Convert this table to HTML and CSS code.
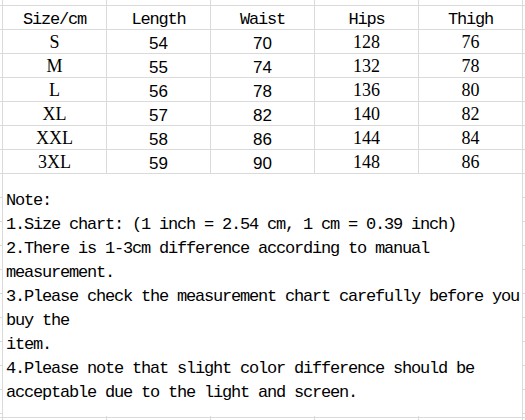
FILE: index.html
```html
<!DOCTYPE html>
<html lang="en">
<head>
<meta charset="utf-8">
<title>Size chart</title>
<link rel="stylesheet" href="styles.css">
</head>
<body>
<div class="sheet">
  <div class="grid">
    <div class="cell edge"></div><div class="cell"></div><div class="cell"></div><div class="cell"></div><div class="cell"></div><div class="cell"></div><div class="cell edge"></div>

    <div class="cell edge"></div>
    <div class="cell head">Size/cm</div>
    <div class="cell head">Length</div>
    <div class="cell head">Waist</div>
    <div class="cell head">Hips</div>
    <div class="cell head">Thigh</div>
    <div class="cell edge"></div>

    <div class="cell edge"></div><div class="cell serif">S</div><div class="cell sans">54</div><div class="cell sans">70</div><div class="cell serif">128</div><div class="cell serif">76</div><div class="cell edge"></div>
    <div class="cell edge"></div><div class="cell serif">M</div><div class="cell sans">55</div><div class="cell sans">74</div><div class="cell serif">132</div><div class="cell serif">78</div><div class="cell edge"></div>
    <div class="cell edge"></div><div class="cell serif">L</div><div class="cell sans">56</div><div class="cell sans">78</div><div class="cell serif">136</div><div class="cell serif">80</div><div class="cell edge"></div>
    <div class="cell edge"></div><div class="cell serif">XL</div><div class="cell sans">57</div><div class="cell sans">82</div><div class="cell serif">140</div><div class="cell serif">82</div><div class="cell edge"></div>
    <div class="cell edge"></div><div class="cell serif">XXL</div><div class="cell sans">58</div><div class="cell sans">86</div><div class="cell serif">144</div><div class="cell serif">84</div><div class="cell edge"></div>
    <div class="cell edge"></div><div class="cell serif">3XL</div><div class="cell sans">59</div><div class="cell sans">90</div><div class="cell serif">148</div><div class="cell serif">86</div><div class="cell edge"></div>
  </div>
  <div class="filler"></div>

  <div class="note">
    <p class="line">Note:</p>
    <p class="line">1.Size chart: (1 inch = 2.54 cm, 1 cm = 0.39 inch)</p>
    <p class="line">2.There is 1-3cm difference according to manual</p>
    <p class="line">measurement.</p>
    <p class="line">3.Please check the measurement chart carefully before you</p>
    <p class="line">buy the</p>
    <p class="line">item.</p>
    <p class="line">4.Please note that slight color difference should be</p>
    <p class="line">acceptable due to the light and screen.</p>
  </div>
</div>
</body>
</html>
```

FILE: styles.css
```css
html, body {
  margin: 0;
  padding: 0;
  background: #ffffff;
  overflow: hidden;
}

.sheet {
  position: relative;
  width: 525px;
  height: 420px;
  overflow: hidden;
  color: #000000;
}

.grid {
  display: grid;
  grid-template-columns: 2px repeat(5, 103px) 1fr;
  grid-template-rows: 5px repeat(7, 23px);
  gap: 1px;
  background: #dadada;
  border-bottom: 1px solid #dadada;
}

.cell {
  background: #ffffff;
  text-align: center;
  white-space: nowrap;
  line-height: 23px;
}

.head {
  font-family: "Liberation Mono", "DejaVu Sans Mono", monospace;
  font-size: 17px;
  letter-spacing: -1.2px;
  padding-top: 2px;
}

.serif {
  font-family: "Liberation Serif", "DejaVu Serif", serif;
  font-size: 18px;
  padding-top: 1px;
}

.sans {
  font-family: "Liberation Sans", Arial, sans-serif;
  font-size: 17px;
  padding-top: 2px;
}

.filler {
  height: 246px;
  background-image:
    linear-gradient(to bottom, transparent 0 243px, #dadada 243px 244px, transparent 244px),
    repeating-linear-gradient(to bottom, transparent 0 23px, #dadada 23px 24px),
    repeating-linear-gradient(to right, #dadada 0 1px, transparent 1px 104px);
  background-position: 0 0, 0 0, 2px 0;
}

.note {
  position: absolute;
  top: 174px;
  left: 3px;
  width: 519px;
  height: 242px;
  box-sizing: border-box;
  padding: 15px 0 0 3px;
  background: #ffffff;
  font-family: "Liberation Mono", "DejaVu Sans Mono", monospace;
  font-size: 17px;
  letter-spacing: -1.2px;
}

.line {
  margin: 0;
  line-height: 24px;
  white-space: pre;
}
```
